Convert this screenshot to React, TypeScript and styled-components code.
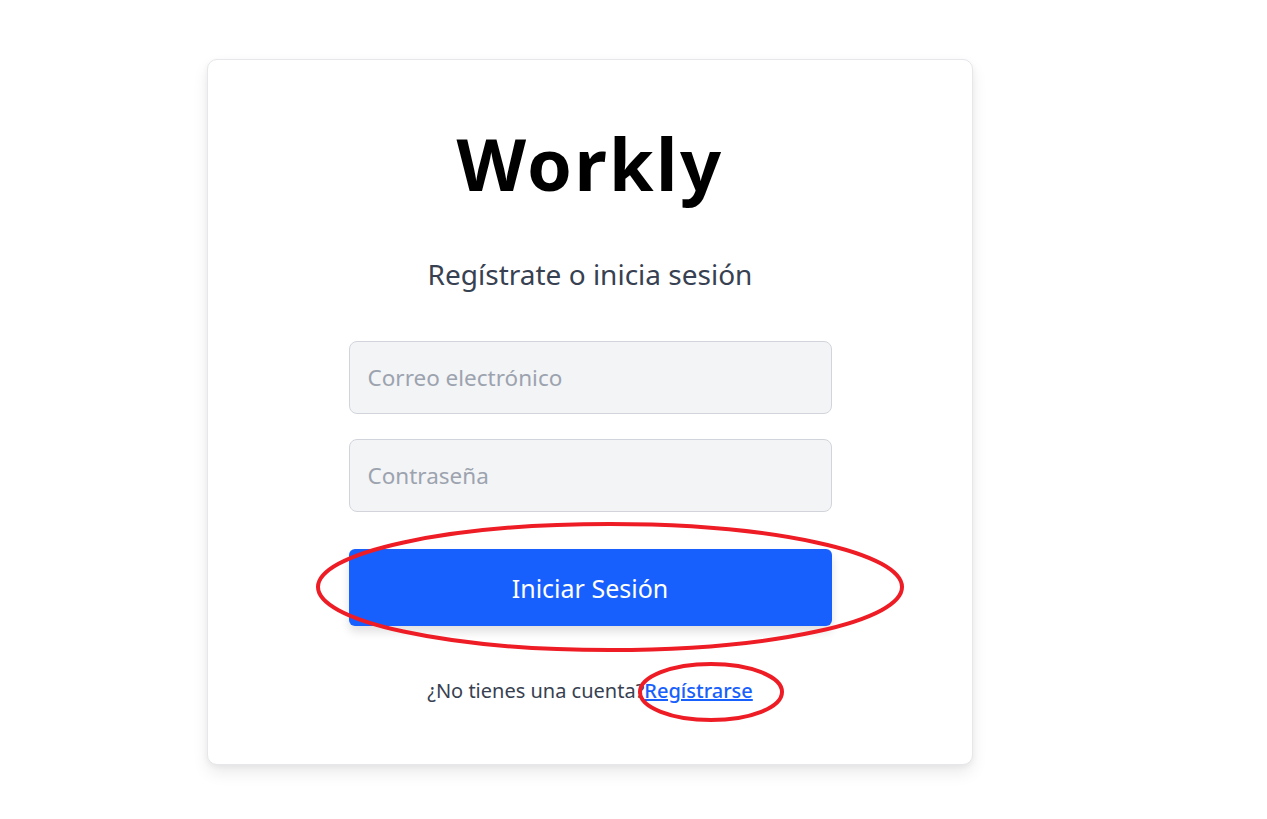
import React from "react";
import styled, { createGlobalStyle } from "styled-components";

const Global = createGlobalStyle`
  html, body { margin: 0; padding: 0; background: #ffffff; }
  body { font-family: "Noto Sans", "Open Sans", sans-serif; }
`;

const Page = styled.div`
  min-height: 819px;
  padding: 59px 0 0 207px;
  box-sizing: border-box;
  position: relative;
`;

const Card = styled.div`
  width: 766px;
  height: 706px;
  box-sizing: border-box;
  background: #fff;
  border: 1px solid #e5e7eb;
  border-radius: 10px;
  box-shadow: 0 8px 16px rgba(0, 0, 0, 0.08), 0 2px 6px rgba(0, 0, 0, 0.05);
  display: flex;
  flex-direction: column;
  align-items: center;
  padding-top: 58px;
`;

const Title = styled.h1`
  margin: 0;
  font-size: 72px;
  line-height: 90px;
  font-weight: 700;
  letter-spacing: 2.4px;
  color: #000;
`;

const Subtitle = styled.p`
  margin: 46px 0 0;
  font-size: 28px;
  line-height: 40px;
  color: #374151;
`;

const Form = styled.form`
  margin-top: 47px;
  width: 483px;
  display: flex;
  flex-direction: column;
  gap: 25px;
`;

const Input = styled.input`
  height: 73px;
  box-sizing: border-box;
  background: #f3f4f6;
  border: 1px solid #d1d5db;
  border-radius: 8px;
  padding: 0 18px;
  font-family: inherit;
  font-size: 22.5px;
  color: #111827;
  outline: none;
  &::placeholder { color: #9ca3af; }
`;

const Button = styled.button`
  margin-top: 12px;
  height: 77px;
  border: none;
  border-radius: 6px;
  background: #1860fe;
  color: #fff;
  font-family: inherit;
  font-size: 25px;
  box-shadow: 0 6px 10px rgba(0, 0, 0, 0.12);
  cursor: pointer;
`;

const Footer = styled.p`
  margin: 51px 0 0;
  font-size: 20px;
  line-height: 28px;
  color: #374151;
`;

const Link = styled.a`
  color: #1860fe;
  font-weight: 500;
  text-decoration: underline;
`;

const Annotations = styled.svg`
  position: absolute;
  left: 0;
  top: 0;
  pointer-events: none;
`;

export default function App() {
  return (
    <>
      <Global />
      <Page>
        <Card>
          <Title>Workly</Title>
          <Subtitle>Regístrate o inicia sesión</Subtitle>
          <Form onSubmit={(e) => e.preventDefault()}>
            <Input type="email" placeholder="Correo electrónico" />
            <Input type="password" placeholder="Contraseña" />
            <Button type="submit">Iniciar Sesión</Button>
          </Form>
          <Footer>
            ¿No tienes una cuenta?<Link href="#">Regístrarse</Link>
          </Footer>
        </Card>
        <Annotations width="1267" height="819">
          <ellipse cx="610" cy="587" rx="292" ry="63" fill="none" stroke="#ee1c25" strokeWidth="4" />
          <ellipse cx="711" cy="692" rx="71" ry="28" fill="none" stroke="#ee1c25" strokeWidth="4" />
        </Annotations>
      </Page>
    </>
  );
}
